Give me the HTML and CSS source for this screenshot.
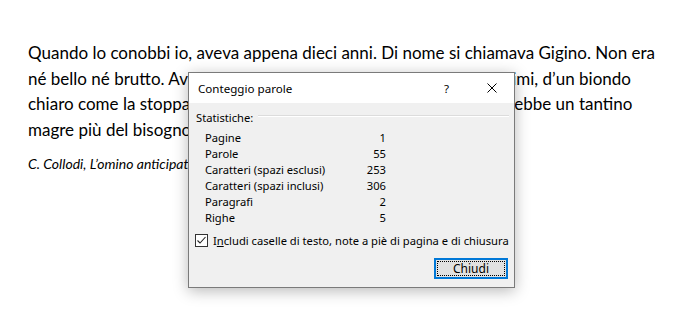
FILE: index.html
```html
<!DOCTYPE html>
<html lang="it">
<head>
    <meta charset="UTF-8">
    <meta name="viewport" content="width=device-width, initial-scale=1.0">
    <title>Conteggio parole</title>
    <link rel="stylesheet" href="styles.css">
</head>
<body>
    <div class="doc">
        <p class="text">Quando lo conobbi io, aveva appena dieci anni. Di nome si chiamava Gigino. Non era<br>
        né bello né brutto. Aveva gli occhi celesti e vivi e i capelli biondissimi, d’un biondo<br>
        chiaro come la stoppa; e le sue gambe sottili, a guardarle, sembrerebbe un tantino<br>
        magre più del bisogno.</p>
        <p class="source">C. Collodi, L’omino anticipatore</p>
    </div>

    <div class="dialog">
        <div class="titlebar">
            <span class="title">Conteggio parole</span>
            <span class="tbtn">?</span>
            <span class="tbtn">
                <svg width="10" height="10" viewBox="0 0 10 10"><path d="M0.5 0.5 L9.5 9.5 M9.5 0.5 L0.5 9.5" stroke="#000" stroke-width="1" fill="none"/></svg>
            </span>
        </div>
        <div class="content">
            <div class="group">
                <span>Statistiche:</span>
                <div class="rule"></div>
            </div>
            <div class="stats">
                <span>Pagine</span><span class="num">1</span>
                <span>Parole</span><span class="num">55</span>
                <span>Caratteri (spazi esclusi)</span><span class="num">253</span>
                <span>Caratteri (spazi inclusi)</span><span class="num">306</span>
                <span>Paragrafi</span><span class="num">2</span>
                <span>Righe</span><span class="num">5</span>
            </div>
            <div class="check">
                <span class="box">
                    <svg width="11" height="11" viewBox="0 0 11 11"><path d="M1.5 5.5 L4 8 L9.5 2" stroke="#222" stroke-width="1.1" fill="none"/></svg>
                </span>
                <span>I<u>n</u>cludi caselle di testo, note a piè di pagina e di chiusura</span>
            </div>
            <div class="actions">
                <button class="btn"><span class="focus">Chiudi</span></button>
            </div>
        </div>
    </div>
</body>
</html>
```

FILE: styles.css
```css
body
{
    margin: 0;
    background: #ffffff;
    font-family: Lato, "Open Sans", sans-serif;
    color: #000000;
}
.doc
{
    padding: 40px 0 0 28px;
}
.text
{
    margin: 0;
    font-size: 17px;
    line-height: 25.5px;
    white-space: nowrap;
}
.source
{
    margin: 12px 0 0 0;
    font-size: 14px;
    line-height: 20px;
    font-style: italic;
}

/* dialog over the page */
.dialog
{
    position: absolute;
    left: 188px;
    top: 72px;
    width: 325px;
    border: 1px solid #7a7a7a;
    background: #f0f0f0;
    box-shadow: 0 3px 14px rgba(0, 0, 0, 0.28);
    font-family: "Noto Sans", sans-serif;
    font-size: 11.2px;
}
.titlebar
{
    height: 30px;
    background: #ffffff;
    display: flex;
    align-items: center;
    padding-left: 9px;
    font-size: 11.6px;
}
.title
{
    flex: 1;
}
.tbtn
{
    width: 45px;
    height: 30px;
    display: flex;
    align-items: center;
    justify-content: center;
}
.content
{
    padding: 6px 5px 8px 7px;
    display: flex;
    flex-direction: column;
}
.group
{
    display: flex;
    align-items: center;
    gap: 5px;
    height: 16px;
}
.rule
{
    flex: 1;
    height: 0;
    border-top: 1px solid #dcdcdc;
    border-bottom: 1px solid #ffffff;
    margin-top: -3px;
}
.stats
{
    display: grid;
    grid-template-columns: 140px 41px;
    grid-auto-rows: 16px;
    align-items: center;
    margin: 4px 0 0 9px;
}
.num
{
    text-align: right;
}
.check
{
    display: flex;
    align-items: center;
    gap: 5px;
    height: 16px;
    margin: 7px 0 0 -1px;
    white-space: nowrap;
}
.box
{
    width: 11px;
    height: 11px;
    border: 1px solid #333333;
    background: #ffffff;
    display: flex;
}
.actions
{
    display: flex;
    justify-content: flex-end;
    margin-top: 10px;
    padding-right: 1px;
}
.btn
{
    width: 74px;
    height: 21px;
    padding: 1px;
    border: 2px solid #0078d7;
    background: #e1e1e1;
    font-family: "Noto Sans", sans-serif;
    font-size: 12px;
    color: #000000;
    display: flex;
}
.focus
{
    flex: 1;
    border: 1px dotted #000000;
    display: flex;
    align-items: center;
    justify-content: center;
}
```
